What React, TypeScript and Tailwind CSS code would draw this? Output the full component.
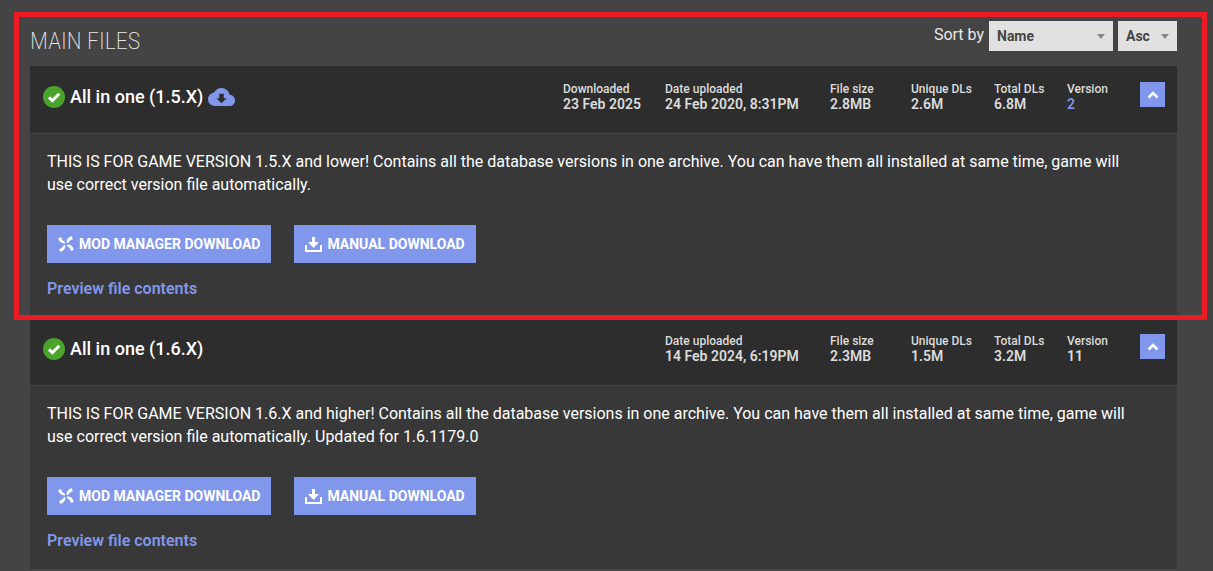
import { useState } from "react";

interface ModFile {
  id: string;
  name: string;
  downloaded?: string;
  uploaded: string;
  size: string;
  uniqueDls: string;
  totalDls: string;
  version: string;
  description: string;
}

const files: ModFile[] = [
  {
    id: "aio-15",
    name: "All in one (1.5.X)",
    downloaded: "23 Feb 2025",
    uploaded: "24 Feb 2020, 8:31PM",
    size: "2.8MB",
    uniqueDls: "2.6M",
    totalDls: "6.8M",
    version: "2",
    description:
      "THIS IS FOR GAME VERSION 1.5.X and lower! Contains all the database versions in one archive. You can have them all installed at same time, game will use correct version file automatically.",
  },
  {
    id: "aio-16",
    name: "All in one (1.6.X)",
    uploaded: "14 Feb 2024, 6:19PM",
    size: "2.3MB",
    uniqueDls: "1.5M",
    totalDls: "3.2M",
    version: "11",
    description:
      "THIS IS FOR GAME VERSION 1.6.X and higher! Contains all the database versions in one archive. You can have them all installed at same time, game will use correct version file automatically. Updated for 1.6.1179.0",
  },
];

function CheckIcon() {
  return (
    <svg viewBox="0 0 22 22" className="size-[22px] shrink-0" aria-hidden="true">
      <circle cx="11" cy="11" r="11" fill="#4aa32b" />
      <path d="M6 11.4l3.4 3.3 6.8-6.9" fill="none" stroke="#fff" strokeWidth="3" />
    </svg>
  );
}

function CloudIcon() {
  return (
    <svg viewBox="0 4 24 16" className="h-[18px] w-[27px] shrink-0 fill-[#8197ec]" aria-hidden="true">
      <path d="M19.35 10.04A7.49 7.49 0 0 0 12 4C9.11 4 6.6 5.64 5.35 8.04A5.994 5.994 0 0 0 0 14c0 3.31 2.69 6 6 6h13c2.76 0 5-2.24 5-5 0-2.64-2.05-4.78-4.65-4.96zM16.500 13L12 17.500 7.500 13H10V9h4v4z" />
    </svg>
  );
}

function ManagerIcon() {
  const blade = "M8.600 6.800C8.500 3.600 10.300.8 13.900.2L14.800 3.200C12.700 3.400 11.300 5 10 7z";
  return (
    <svg viewBox="0 0 16 16" className="size-4 shrink-0 fill-white" aria-hidden="true">
      <path d={blade} />
      <path d={blade} transform="rotate(90 8 8)" />
      <path d={blade} transform="rotate(180 8 8)" />
      <path d={blade} transform="rotate(270 8 8)" />
    </svg>
  );
}

function DownloadIcon() {
  return (
    <svg viewBox="0 0 17 15" className="h-[15px] w-[17px] shrink-0 fill-white" aria-hidden="true">
      <path d="M7 0h3v5h4l-5.500 6L3 5h4z" />
      <path d="M0 8h2v5h13V8h2v7H0z" />
    </svg>
  );
}

function SortSelect({ label, options, className }: { label: string; options: string[]; className: string }) {
  return (
    <div className="relative">
      <select
        aria-label={label}
        className={`h-[30px] appearance-none bg-[#e1e1e1] pl-2 text-sm font-bold text-[#444] outline-none ${className}`}
      >
        {options.map((option) => (
          <option key={option}>{option}</option>
        ))}
      </select>
      <svg
        viewBox="0 0 8 5"
        className="pointer-events-none absolute top-[13px] right-2 h-[5px] w-2 fill-[#888]"
        aria-hidden="true"
      >
        <path d="M0 0h8L4 5z" />
      </svg>
    </div>
  );
}

function Stat({ label, value, className, link }: { label: string; value: string; className: string; link?: boolean }) {
  return (
    <div className={className}>
      <dt className="text-xs leading-[15px] font-medium">{label}</dt>
      <dd className="text-sm leading-[15px] font-semibold">
        {link ? (
          <a href="#changelog" className="text-[#8197ec]">
            {value}
          </a>
        ) : (
          value
        )}
      </dd>
    </div>
  );
}

function FileEntry({ file }: { file: ModFile }) {
  const [open, setOpen] = useState(true);

  return (
    <article>
      <header className="flex items-start justify-between border-b border-[#474747] bg-[#2d2d2d] pt-4 pr-3 pb-[21px] pl-[13px]">
        <div className="flex h-[30px] items-center gap-[5px]">
          <CheckIcon />
          <h3 className="text-lg font-medium text-white">{file.name}</h3>
          {file.downloaded && <CloudIcon />}
        </div>
        <div className="flex">
          <dl className="flex whitespace-nowrap text-[#dcdcdc]">
            {file.downloaded && <Stat label="Downloaded" value={file.downloaded} className="w-[102px]" />}
            <Stat label="Date uploaded" value={file.uploaded} className="w-[165px]" />
            <Stat label="File size" value={file.size} className="w-[81px]" />
            <Stat label="Unique DLs" value={file.uniqueDls} className="w-[83px]" />
            <Stat label="Total DLs" value={file.totalDls} className="w-[73px]" />
            <Stat label="Version" value={file.version} className="w-[73px]" link={Boolean(file.downloaded)} />
          </dl>
          <button
            type="button"
            aria-label="Toggle file details"
            aria-expanded={open}
            onClick={() => setOpen(!open)}
            className="flex size-[25px] items-center justify-center bg-[#8197ec]"
          >
            <svg viewBox="0 0 12 8" className={`h-2 w-3 ${open ? "" : "rotate-180"}`} aria-hidden="true">
              <path d="M1.500 6.500L6 2l4.500 4.500" fill="none" stroke="#fff" strokeWidth="2.600" />
            </svg>
          </button>
        </div>
      </header>
      {open && (
        <div className="border-b border-[#474747] bg-[#383838] py-4 pr-8 pl-[17px]">
          <p className="leading-[23px] text-white">{file.description}</p>
          <div className="mt-[29px] flex gap-[23px]">
            <button
              type="button"
              className="flex h-[38px] items-center gap-[5px] bg-[#8197ec] px-[11px] text-sm font-bold text-white uppercase"
            >
              <ManagerIcon />
              Mod manager download
            </button>
            <button
              type="button"
              className="flex h-[38px] items-center gap-[5px] bg-[#8197ec] px-[11px] text-sm font-bold text-white uppercase"
            >
              <DownloadIcon />
              Manual download
            </button>
          </div>
          <a href="#preview" className="mt-3.5 block w-fit leading-6 font-semibold text-[#8197ec]">
            Preview file contents
          </a>
        </div>
      )}
    </article>
  );
}

export default function App() {
  const [first, ...rest] = files;

  return (
    <main className="min-h-screen bg-[#444] pr-9 pl-[30px] font-['Roboto','Liberation_Sans',sans-serif]">
      <section className="relative">
        <div className="flex items-start justify-between pt-[21px] pb-[5px]">
          <h2 className="font-['Roboto_Condensed','Roboto',sans-serif] text-2xl leading-10 font-extralight text-[#e8e8e8] uppercase">
            Main files
          </h2>
          <div className="flex items-start gap-[5px] text-[#e8e8e8]">
            <span className="leading-7">Sort by</span>
            <SortSelect label="Sort field" options={["Name", "Date", "Size"]} className="w-[124px]" />
            <SortSelect label="Sort order" options={["Asc", "Desc"]} className="w-[59px]" />
          </div>
        </div>
        <FileEntry file={first} />
        <div className="pointer-events-none absolute top-3 -right-[30px] -bottom-0.5 -left-4 border-5 border-[#ed1c24]" />
      </section>
      {rest.map((file) => (
        <FileEntry key={file.id} file={file} />
      ))}
    </main>
  );
}
